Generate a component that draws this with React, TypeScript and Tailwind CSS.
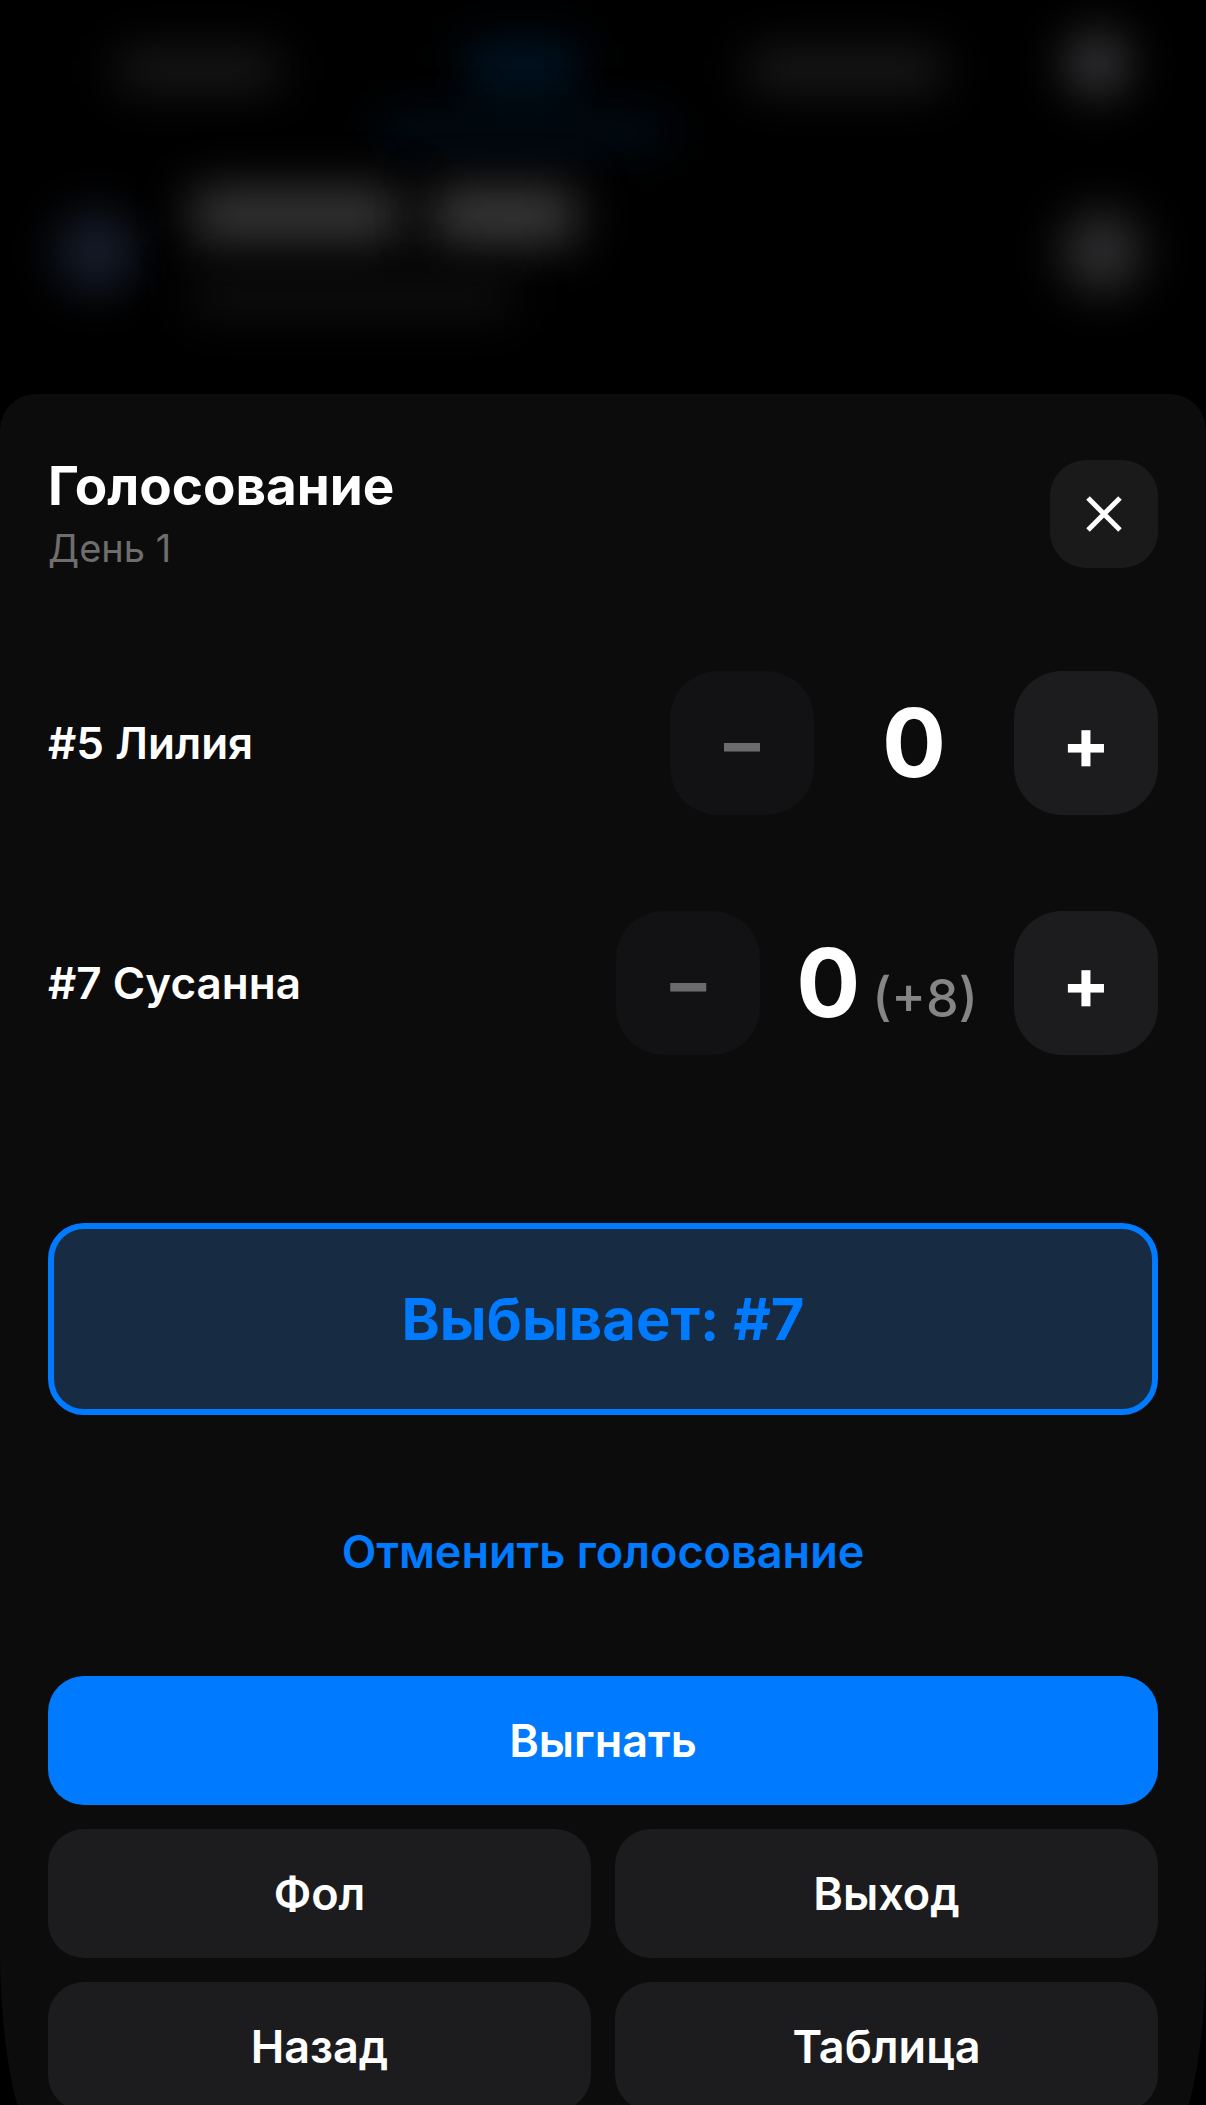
import { useState } from "react";

type Candidate = {
    seat: number;
    name: string;
    votes: number;
    extra?: number;
}

const initialCandidates: Candidate[] = [
    { seat: 5, name: 'Лилия', votes: 0 },
    { seat: 7, name: 'Сусанна', votes: 0, extra: 8 },
];

const actions = ['Фол', 'Выход', 'Назад', 'Таблица'];

// the dimmed and blurred screen that stays behind the sheet
const Backdrop = () => {
    return (
        <div aria-hidden="true" className="shrink-0 h-[394px] pt-8 overflow-hidden">
            <div className="grid grid-cols-[1fr_1fr_1fr_178px] pl-9 pr-5 h-[108px]">
                <div className="flex justify-center pt-5">
                    <div className="w-40 h-9 bg-[#1d1d1e] blur-[24px]"></div>
                </div>
                <div className="flex flex-col items-center justify-between pt-3">
                    <div className="w-28 h-12 bg-[#001628] blur-[24px]"></div>
                    <div className="w-72 h-4 bg-[#001c34] blur-[24px]"></div>
                </div>
                <div className="flex justify-center pt-5">
                    <div className="w-48 h-9 bg-[#1f1f20] blur-[24px]"></div>
                </div>
                <div className="flex justify-center">
                    <div className="size-16 rounded-full bg-[#39393c] blur-[24px]"></div>
                </div>
            </div>
            <div className="flex items-center pl-14 pr-16 pt-12">
                <div className="size-20 rounded-full bg-[#181e2e] blur-[24px]"></div>
                <div className="flex-1 pl-14">
                    <div className="flex gap-8">
                        <div className="w-52 h-14 bg-[#373737] blur-[24px]"></div>
                        <div className="w-36 h-14 bg-[#3c3c3c] blur-[24px]"></div>
                    </div>
                    <div className="mt-8 w-80 h-10 bg-[#101012] blur-[24px]"></div>
                </div>
                <div className="size-20 rounded-full bg-[#303032] blur-[24px]"></div>
            </div>
        </div>
    );
};

type VoteRowProps = {
    candidate: Candidate;
    onChange: (step: number) => void;
}

const VoteRow = ({ candidate, onChange }: VoteRowProps) => {
    const { seat, name, votes, extra } = candidate;
    return (
        <div className="flex items-center justify-between py-12">
            <span className="text-[44px] font-semibold">#{seat} {name}</span>
            <div className="flex items-center gap-9">
                <button
                    onClick={() => onChange(-1)}
                    disabled={votes === 0}
                    aria-label={`Убрать голос ${name}`}
                    className="size-36 rounded-[48px] bg-[#1c1c1e] text-[72px] font-bold disabled:bg-[#121214] disabled:text-[#6b6b6b]">
                    –
                </button>
                <div className="flex items-baseline justify-center gap-3 min-w-32">
                    <span className="text-[95px] leading-[144px] font-bold">{votes}</span>
                    {extra && <span className="text-[52px] font-medium text-[#858585]">(+{extra})</span>}
                </div>
                <button
                    onClick={() => onChange(1)}
                    aria-label={`Добавить голос ${name}`}
                    className="size-36 rounded-[48px] bg-[#1c1c1e] text-[72px] font-bold">
                    +
                </button>
            </div>
        </div>
    );
};

export default function App() {
    const [candidates, setCandidates] = useState<Candidate[]>(initialCandidates);

    const total = (c: Candidate) => c.votes + (c.extra ?? 0);
    const leader = candidates.reduce((best, c) => (total(c) > total(best) ? c : best));

    const handleVote = (seat: number, step: number) => {
        setCandidates((prev) => prev.map((c) => (c.seat === seat ? { ...c, votes: Math.max(0, c.votes + step) } : c)));
    };

    return (
        <div className="h-screen overflow-hidden flex flex-col bg-black text-white font-['Inter',sans-serif]">
            <Backdrop />
            <main className="shrink-0 px-12 pt-[66px] pb-9 bg-[#0c0c0c] rounded-t-[36px] rounded-b-[45px_200px]">
                <header className="flex items-start justify-between">
                    <div>
                        <h1 className="text-[53px] leading-[52px] font-bold">Голосование</h1>
                        <p className="mt-3 text-[38px] leading-[48px] text-[#6e6e6e]">День 1</p>
                    </div>
                    <button aria-label="Закрыть" className="size-[108px] rounded-[36px] bg-[#1a1a1a] flex items-center justify-center">
                        <svg width="36" height="36" viewBox="0 0 36 36" fill="none" stroke="currentColor" strokeWidth="5">
                            <path d="M2 2 34 34M34 2 2 34" />
                        </svg>
                    </button>
                </header>

                <section className="pt-[51px]">
                    {candidates.map((c) => (
                        <VoteRow key={c.seat} candidate={c} onChange={(step) => handleVote(c.seat, step)} />
                    ))}
                </section>

                <div className="mt-30 h-48 flex items-center justify-center rounded-[36px] border-6 border-[#007aff] bg-[#172b42] text-[58px] font-bold text-[#007aff]">
                    Выбывает: #{leader.seat}
                </div>

                <div className="flex justify-center pt-[99px] pb-[87px]">
                    <button
                        onClick={() => setCandidates(initialCandidates)}
                        className="h-[75px] text-[45px] font-semibold text-[#007aff]">
                        Отменить голосование
                    </button>
                </div>

                <div className="grid grid-cols-2 gap-6">
                    <button className="col-span-2 h-[129px] rounded-[36px] bg-[#007aff] text-[45px] font-semibold">
                        Выгнать
                    </button>
                    {actions.map((label) => (
                        <button key={label} className="h-[129px] rounded-[36px] bg-[#1c1c1e] text-[45px] font-semibold">
                            {label}
                        </button>
                    ))}
                </div>
            </main>
        </div>
    );
}
